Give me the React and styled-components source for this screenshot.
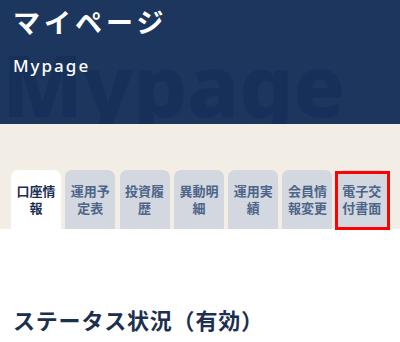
import React from 'react';
import styled, { createGlobalStyle } from 'styled-components';

const tabs = [
	['口座情', '報'],
	['運用予', '定表'],
	['投資履', '歴'],
	['異動明', '細'],
	['運用実', '績'],
	['会員情', '報変更'],
	['電子交', '付書面'],
];

const App = () => {
	return (
		<>
			<GlobalStyle />
			<Header>
				<BackWord>Mypage</BackWord>
				<Title>マイページ</Title>
				<SubTitle>Mypage</SubTitle>
			</Header>
			<TabArea>
				<TabList>
					{tabs.map((lines, index) => (
						<Tab key={index} active={index === 0} marked={index === 6}>
							{lines[0]}
							<br />
							{lines[1]}
						</Tab>
					))}
				</TabList>
			</TabArea>
			<Content>
				<Heading>ステータス状況（有効）</Heading>
			</Content>
		</>
	);
};

const GlobalStyle = createGlobalStyle`
	body {
		margin: 0;
		background: #ffffff;
		font-family: 'Noto Sans', 'Noto Sans CJK JP', sans-serif;
	}
`;

const Header = styled.header`
	position: relative;
	overflow: hidden;
	height: 124px;
	padding: 0 13px;
	background: #1c365e;
	color: #ffffff;
`;

const BackWord = styled.div`
	position: absolute;
	left: 2px;
	top: 24px;
	font-family: 'Noto Sans', sans-serif;
	font-weight: 800;
	font-size: 85px;
	line-height: 120px;
	color: #17305a;
	white-space: nowrap;
`;

const Title = styled.h1`
	position: relative;
	margin: 0;
	padding-top: 5px;
	font-family: 'Noto Sans CJK JP', sans-serif;
	font-size: 27px;
	font-weight: 700;
	line-height: 34px;
	letter-spacing: 4px;
`;

const SubTitle = styled.p`
	position: relative;
	margin: 16px 0 0;
	font-family: 'Noto Sans', sans-serif;
	font-size: 17px;
	font-weight: 500;
	line-height: 22px;
	letter-spacing: 2px;
`;

const TabArea = styled.nav`
	background: #f2eee5;
	padding: 46px 11px 0;
`;

const TabList = styled.div`
	display: flex;
	gap: 4.3px;
`;

const Tab = styled.div`
	position: relative;
	width: 50px;
	box-sizing: border-box;
	padding: 12px 0 13px;
	border-radius: 7px 7px 0 0;
	background: ${(p) => (p.active ? '#ffffff' : '#d2d7e0')};
	color: ${(p) => (p.active ? '#1c2f52' : '#4d6588')};
	font-family: 'Noto Sans CJK JP', sans-serif;
	font-size: 13px;
	font-weight: 700;
	line-height: 17px;
	text-align: center;

	&::after {
		content: '';
		display: ${(p) => (p.marked ? 'block' : 'none')};
		position: absolute;
		top: 1px;
		left: -2px;
		right: -3px;
		bottom: -1px;
		border: 3px solid #ff0000;
	}
`;

const Content = styled.main`
	padding: 74px 13px 0;
`;

const Heading = styled.h2`
	margin: 0;
	font-family: 'Noto Sans CJK JP', sans-serif;
	font-size: 22px;
	font-weight: 700;
	line-height: 32px;
	color: #1c2f4f;
	letter-spacing: 0.8px;
`;

export default App;
